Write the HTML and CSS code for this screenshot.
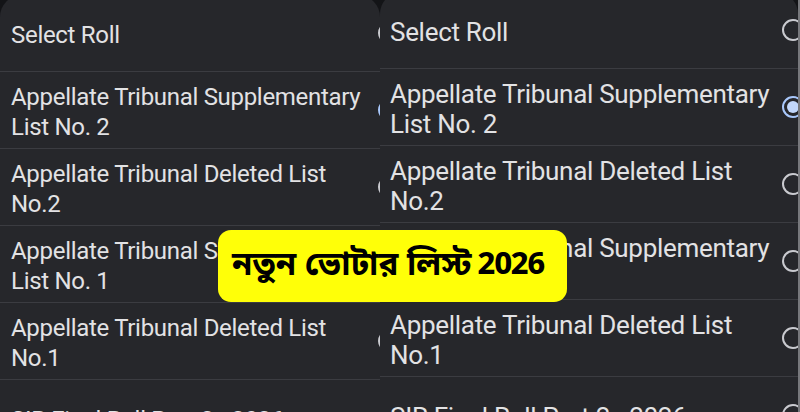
FILE: index.html
```html
<!DOCTYPE html>
<html lang="en">
<head>
<meta charset="utf-8">
<title>Select Roll</title>
<link rel="stylesheet" href="styles.css">
</head>
<body>
<div class="panel panel-left">
  <div class="row"><div class="label">Select Roll</div><span class="radio"></span></div>
  <div class="row"><div class="label">Appellate Tribunal Supplementary List No. 2</div><span class="radio on"></span></div>
  <div class="row"><div class="label">Appellate Tribunal Deleted List No.2</div><span class="radio"></span></div>
  <div class="row"><div class="label">Appellate Tribunal Supplementary List No. 1</div><span class="radio"></span></div>
  <div class="row"><div class="label">Appellate Tribunal Deleted List No.1</div><span class="radio"></span></div>
  <div class="row"><div class="label">SIR Final Roll Part 2 - 2026</div><span class="radio"></span></div>
</div>
<div class="panel panel-right">
  <div class="row"><div class="label">Select Roll</div><span class="radio"></span></div>
  <div class="row"><div class="label">Appellate Tribunal Supplementary List No. 2</div><span class="radio on"></span></div>
  <div class="row"><div class="label">Appellate Tribunal Deleted List No.2</div><span class="radio"></span></div>
  <div class="row"><div class="label">Appellate Tribunal Supplementary List No. 1</div><span class="radio"></span></div>
  <div class="row"><div class="label">Appellate Tribunal Deleted List No.1</div><span class="radio"></span></div>
  <div class="row"><div class="label">SIR Final Roll Part 2 - 2026</div><span class="radio"></span></div>
</div>
<div class="edge"></div>
<div class="badge"><span class="bn">নতুন ভোটার লিস্ট</span><span class="yr">2026</span></div>
</body>
</html>
```

FILE: styles.css
```css
html, body {
  margin: 0;
  padding: 0;
  overflow: hidden;
}
body {
  width: 800px;
  height: 412px;
  background: #131417;
  display: flex;
  align-items: flex-start;
  position: relative;
  font-family: Roboto, "Noto Sans", sans-serif;
  color: #e2e2e4;
}
.panel {
  background: #26272b;
  overflow: hidden;
  border-radius: 22px 22px 0 0;
  flex: none;
  height: 430px;
}
.panel-left {
  width: 380px;
  margin-top: -5px;
  font-size: 24px;
  letter-spacing: -0.3px;
}
.panel-right {
  width: 418px;
  margin-top: -8px;
  font-size: 26px;
  letter-spacing: -0.3px;
}
.edge {
  width: 2px;
  height: 412px;
  background: #77787c;
  flex: none;
}
.row {
  height: 76px;
  border-bottom: 1px solid #3b3c41;
  display: flex;
  align-items: center;
  box-sizing: content-box;
}
.panel-left .row {
  padding-left: 11px;
}
.panel-right .row {
  padding-left: 10px;
}
.label {
  line-height: 30px;
  flex: none;
  padding-top: 3px;
}
.panel-left .label {
  width: 356px;
  margin-right: 11px;
}
.panel-right .label {
  width: 380px;
  margin-right: 12px;
}
.radio {
  flex: none;
  width: 18px;
  height: 18px;
  border: 2px solid #c9cacf;
  border-radius: 50%;
  box-sizing: content-box;
  position: relative;
}
.radio.on {
  border-color: #a8c7fa;
}
.radio.on::after {
  content: "";
  position: absolute;
  left: 3px;
  top: 3px;
  width: 12px;
  height: 12px;
  border-radius: 50%;
  background: #c2d7fb;
}
.badge {
  position: absolute;
  left: 218px;
  top: 230px;
  width: 349px;
  height: 72px;
  background: #ffff08;
  border-radius: 13px;
  display: flex;
  align-items: center;
  padding-left: 14px;
  box-sizing: border-box;
  color: #000;
  font-weight: bold;
  font-family: "Noto Sans Bengali", "Noto Serif Bengali", "Lohit Bengali", "FreeSans", "Noto Sans", sans-serif;
}
.bn {
  font-size: 33px;
}
.yr {
  font-size: 31px;
  margin-left: 6px;
  letter-spacing: -1.5px;
}
```
